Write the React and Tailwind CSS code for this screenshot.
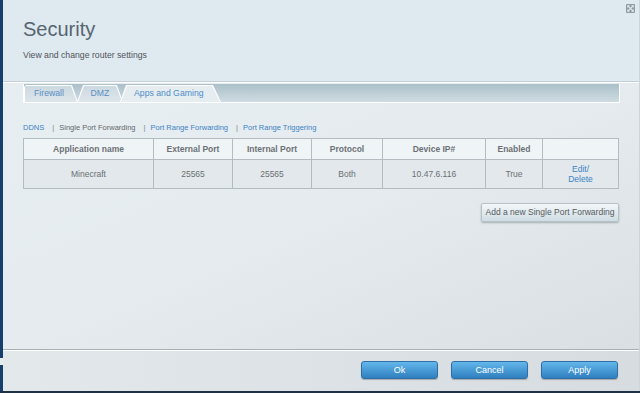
import React from 'react';

const cols = [
  { name: 'Application name', w: 'w-[130px]', val: 'Minecraft' },
  { name: 'External Port', w: 'w-[79px]', val: '25565' },
  { name: 'Internal Port', w: 'w-[79px]', val: '25565' },
  { name: 'Protocol', w: 'w-[71px]', val: 'Both' },
  { name: 'Device IP#', w: 'w-[103px]', val: '10.47.6.116' },
  { name: 'Enabled', w: 'w-[57px]', val: 'True' },
];

function CloseIcon() {
  return (
    <svg width="9" height="9" viewBox="0 0 9 9">
      <rect x="0" y="0" width="9" height="9" rx="1" fill="#8f9aa2" />
      <path d="M2 2 L7 7 M7 2 L2 7" stroke="#dfe7ec" strokeWidth="1.1" />
      <path d="M1.5 1.5 h2 M1.5 1.5 v2 M7.5 1.5 h-2 M7.5 1.5 v2 M1.5 7.5 h2 M1.5 7.5 v-2 M7.5 7.5 h-2 M7.5 7.5 v-2" stroke="#dfe7ec" strokeWidth="0.8" />
    </svg>
  );
}

function FooterButton({ label }) {
  return (
    <button className="w-[77px] h-[18px] rounded-[3px] border border-[#2d6fa6] bg-gradient-to-b from-[#63b7ea] to-[#2f7fc0] text-white text-[9px] leading-none shadow-[0_1px_1px_rgba(0,0,0,0.25)]">
      {label}
    </button>
  );
}

export default function App() {
  return (
    <div className="w-[640px] h-[393px] overflow-hidden bg-[#163f6c] font-['Liberation_Sans',Arial,sans-serif] relative">
      {/* small notch on the left strip */}
      <div className="absolute left-0 top-[358px] w-[3px] h-[7px] bg-[#e6ebee]" />
      <div className="ml-[3px] h-[391px] flex flex-col relative border-r border-[#cbd5dc]">
        {/* Header */}
        <div className="h-[82px] bg-[#dfe9f0] pl-[20px] pt-[19px] relative border-b border-[#c4ced6]">
          <div className="text-[20px] leading-none text-[#56656f]">Security</div>
          <div className="mt-[12px] text-[8.7px] leading-none text-[#4f5458]">View and change router settings</div>
          <div className="absolute right-[4px] top-[4px]">
            <CloseIcon />
          </div>
        </div>

        {/* Body */}
        <div className="flex-1 bg-gradient-to-br from-[#e7eef1] via-[#e5ebee] to-[#d9dfe3] border-t border-white pl-[20px]">
          {/* tab bar */}
          <div className="mt-[1px] w-[597px] h-[19px] bg-gradient-to-b from-[#abc0ca] to-[#cfdce2] border-l border-r border-b border-white flex items-end pt-[2px]">
            <div className="h-[17px] w-[54px] bg-white [clip-path:polygon(0_0,calc(100%-6px)_0,100%_100%,0_100%)] rounded-tl-[3px]">
              <div className="h-full w-full bg-gradient-to-b from-[#cbd8df] to-[#dde6eb] [clip-path:polygon(1px_1px,calc(100%-7px)_1px,calc(100%-1px)_100%,1px_100%)] flex items-center pl-[10px] text-[8.7px] text-[#5a8fc2] rounded-tl-[3px]">
                Firewall
              </div>
            </div>
            <div className="h-[17px] w-[46px] -ml-[1px] bg-white [clip-path:polygon(6px_0,calc(100%-6px)_0,100%_100%,0_100%)]">
              <div className="h-full w-full bg-gradient-to-b from-[#cbd8df] to-[#dde6eb] [clip-path:polygon(7px_1px,calc(100%-7px)_1px,calc(100%-1px)_100%,1px_100%)] flex items-center justify-center text-[8.7px] text-[#5a8fc2]">
                DMZ
              </div>
            </div>
            <div className="h-[17px] w-[101px] -ml-[3px] bg-white [clip-path:polygon(6px_0,calc(100%-8px)_0,100%_100%,0_100%)]">
              <div className="h-full w-full bg-[#e6edf0] [clip-path:polygon(7px_1px,calc(100%-9px)_1px,calc(100%-1px)_100%,1px_100%)] flex items-center pl-[14px] text-[8.7px] text-[#4d8ccb]">
                Apps and Gaming
              </div>
            </div>
          </div>

          {/* sub links */}
          <div className="mt-[20px] h-[10px] flex items-center text-[7.5px] leading-none">
            <span className="text-[#3b82c4]">DDNS</span>
            <span className="ml-[8px] mr-[5px] text-[#7d8488]">|</span>
            <span className="text-[#62686c]">Single Port Forwarding</span>
            <span className="ml-[8px] mr-[5px] text-[#7d8488]">|</span>
            <span className="text-[#3b82c4]">Port Range Forwarding</span>
            <span className="ml-[8px] mr-[5px] text-[#7d8488]">|</span>
            <span className="text-[#3b82c4]">Port Range Triggering</span>
          </div>

          {/* table */}
          <table className="mt-[5px] table-fixed border-collapse w-[596px] text-[8.5px] text-[#6b7074]">
            <thead>
              <tr className="h-[21px] bg-[#eff4f7]">
                {cols.map((c) => (
                  <th key={c.name} className={`${c.w} border border-[#b3bcc2] font-bold text-[#6d7175] text-center`}>
                    {c.name}
                  </th>
                ))}
                <th className="border border-[#b3bcc2]" />
              </tr>
            </thead>
            <tbody>
              <tr className="h-[29px] bg-[#e2e8eb]">
                {cols.map((c) => (
                  <td key={c.name} className="border border-[#b3bcc2] text-center">
                    {c.val}
                  </td>
                ))}
                <td className="border border-[#b3bcc2] text-center text-[#3b84c6] leading-[10px]">
                  Edit/
                  <br />
                  Delete
                </td>
              </tr>
            </tbody>
          </table>

          <div className="w-[596px] flex justify-end mt-[14px]">
            <button className="h-[19px] w-[138px] whitespace-nowrap rounded-[2px] border border-[#b5c2c9] bg-gradient-to-b from-[#f4f7f9] to-[#cfdde3] text-[8.5px] text-[#555a5e] leading-none shadow-[0_1px_2px_rgba(0,0,0,0.25)]">
              Add a new Single Port Forwarding
            </button>
          </div>
        </div>

        {/* Footer */}
        <div className="h-[42px] border-t border-[#a7b0b6] bg-gradient-to-r from-[#e3e8eb] to-[#d6dce0] shadow-[inset_0_1px_0_#ffffff] flex justify-end items-start pt-[11px] pr-[21px] gap-[13px]">
          <FooterButton label="Ok" />
          <FooterButton label="Cancel" />
          <FooterButton label="Apply" />
        </div>
      </div>
      <div className="h-[2px] bg-[#1f3245]" />
    </div>
  );
}
